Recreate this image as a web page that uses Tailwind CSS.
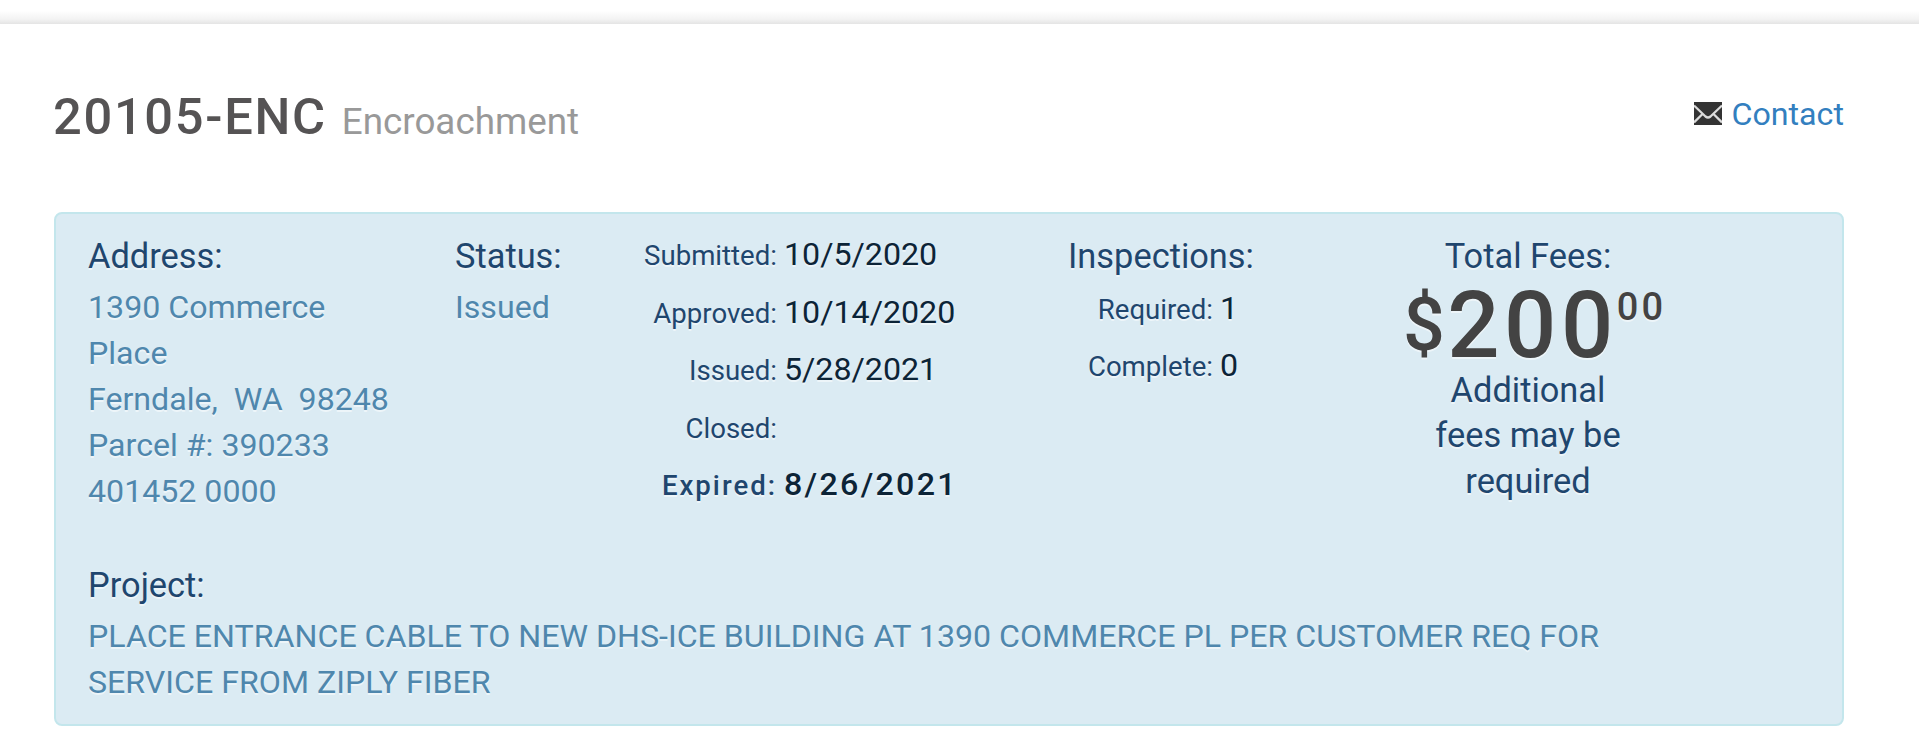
<!DOCTYPE html>
<html lang="en">
<head>
    <meta charset="UTF-8">
    <meta name="viewport" content="width=device-width, initial-scale=1.0">
    <title>20105-ENC Encroachment</title>
    <script src="https://cdn.jsdelivr.net/npm/@tailwindcss/browser@4"></script>
</head>
<body class="bg-white h-screen overflow-hidden font-['Roboto',sans-serif]">
    <!-- bottom shadow of the top bar -->
    <div class="h-6 bg-linear-to-b from-white from-45% via-[#f3f3f3] via-80% to-[#e4e4e4]"></div>

    <main class="ml-[54px] w-[1790px]">
        <header class="flex justify-between items-start h-[188px] pt-[63px]">
            <h1 class="flex items-baseline leading-[60px]">
                <span class="-ml-px text-[50.6px] font-medium tracking-[1.7px] text-[#555354]">20105-ENC</span>
                <small class="ml-[15px] text-[36.8px] text-[#999]">Encroachment</small>
            </h1>
            <a href="#" class="flex items-center gap-2.5 mt-1 text-[32.2px] leading-[46px] text-[#337fbf]">
                <svg class="w-7 h-[23px] -mt-0.5" viewBox="0 0 28 23" fill="none">
                    <rect width="28" height="23" fill="#333"></rect>
                    <path d="M0 3.5L11.5 14.5Q14 16.5 16.5 14.5L28 3.5M0 20.5L8.5 12M28 20.5L19.5 12" stroke="#dcdcdc" stroke-width="2.3"></path>
                </svg>
                Contact
            </a>
        </header>

        <section class="h-[514px] px-8 pt-[19px] rounded-lg border-2 border-[#c3e6ec] bg-[#dbebf3] text-[#1f466e] [text-shadow:0_2px_0_rgba(255,255,255,0.5)]">
            <div class="grid grid-cols-[367px_171px_442px_336px_248px] h-[282px]">
                <div>
                    <h2 class="text-[34.4px] leading-[46px] mb-[5px]">Address:</h2>
                    <p class="text-[32.15px] leading-[46px] text-[#4f87ad]">
                        1390 Commerce<br>
                        Place<br>
                        Ferndale,&nbsp; WA&nbsp; 98248<br>
                        Parcel #: 390233<br>
                        401452 0000
                    </p>
                </div>

                <div>
                    <h2 class="text-[34.4px] leading-[46px] mb-[5px]">Status:</h2>
                    <p class="text-[32.15px] leading-[46px] text-[#4f87ad]">Issued</p>
                </div>

                <dl class="grid grid-cols-[151px_1fr] auto-rows-[57.6px] content-start items-baseline gap-x-[7px] -mt-[7px] leading-[57.6px]">
                    <dt class="text-right text-[27.6px]">Submitted:</dt>
                    <dd class="text-[32.2px] text-[#0c2437]">10/5/2020</dd>
                    <dt class="text-right text-[27.6px]">Approved:</dt>
                    <dd class="text-[32.2px] text-[#0c2437]">10/14/2020</dd>
                    <dt class="text-right text-[27.6px]">Issued:</dt>
                    <dd class="text-[32.2px] text-[#0c2437]">5/28/2021</dd>
                    <dt class="text-right text-[27.6px]">Closed:</dt>
                    <dd class="text-[32.2px] text-[#0c2437]">&nbsp;</dd>
                    <dt class="text-right text-[27.6px] font-medium tracking-[2px]">Expired:</dt>
                    <dd class="text-[32.2px] font-medium tracking-[2.3px] text-[#0c2437]">8/26/2021</dd>
                </dl>

                <div>
                    <h2 class="text-[34.4px] leading-[46px]">Inspections:</h2>
                    <dl class="grid grid-cols-[145px_1fr] auto-rows-[57px] items-baseline gap-x-[7px] pt-px leading-[57px]">
                        <dt class="text-right text-[27.6px]">Required:</dt>
                        <dd class="text-[32.2px] text-[#0c2437]">1</dd>
                        <dt class="text-right text-[27.6px]">Complete:</dt>
                        <dd class="text-[32.2px] text-[#0c2437]">0</dd>
                    </dl>
                </div>

                <div class="text-center text-[34.4px]">
                    <h2 class="leading-[46px]">Total Fees:</h2>
                    <div class="flex items-start h-[89px] font-medium text-[#434343]">
                        <span class="mt-[9px] -ml-px text-[73.6px] leading-[74px] tracking-[2.3px]">$</span>
                        <span class="mt-px text-[92px] leading-[92px] tracking-[4.6px]">200</span>
                        <span class="mt-[9px] -ml-px text-[38px] leading-[38px] tracking-[3.2px]">00</span>
                    </div>
                    <p class="leading-[45.4px]">Additional<br>fees may be<br>required</p>
                </div>
            </div>

            <h2 class="mt-[47px] mb-[5px] text-[34.4px] leading-[46px]">Project:</h2>
            <p class="w-[1560px] text-[32.15px] leading-[46px] text-[#4f87ad]">PLACE ENTRANCE CABLE TO NEW DHS-ICE BUILDING AT 1390 COMMERCE PL PER CUSTOMER REQ FOR SERVICE FROM ZIPLY FIBER</p>
        </section>
    </main>
</body>
</html>
